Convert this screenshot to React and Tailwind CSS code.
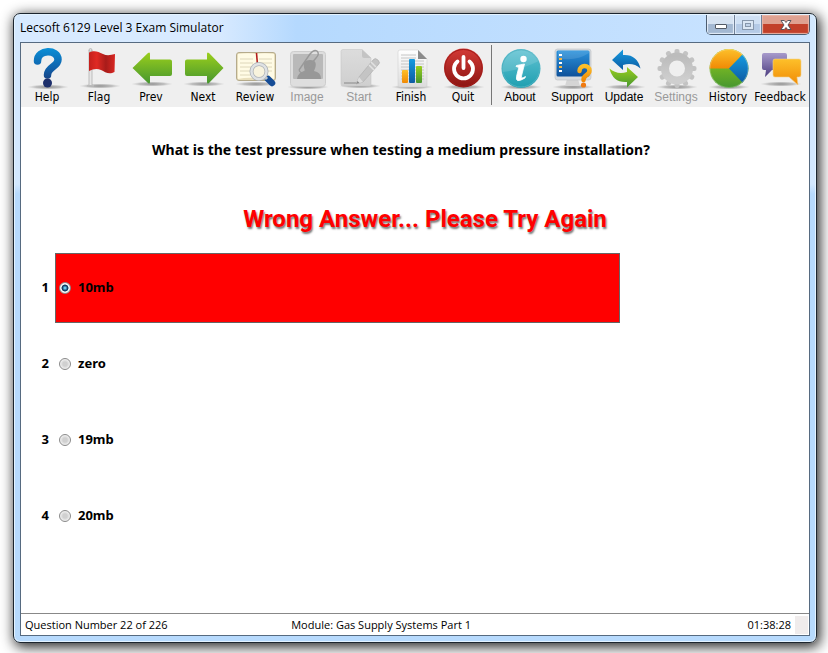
import { useState } from "react";

const TAHOMA = "font-['DejaVu_Sans_Condensed','Noto_Sans',sans-serif]";
const TAHOMA_BOLD = "font-['Noto_Sans',sans-serif] font-bold";
const SEGOE = "font-['Open_Sans',sans-serif]";

function Icon({ children, shadow = 41 }) {
  return (
    <svg viewBox="0 0 44 44" className="block h-11 w-11" aria-hidden="true">
      <ellipse cx="23" cy={shadow} rx="21" ry="2.5" fill="url(#floor)" />
      {children}
    </svg>
  );
}

function Gradient({ id, from, to }) {
  return (
    <linearGradient id={id} x1="0" y1="0" x2="0" y2="1">
      <stop offset="0" stopColor={from} />
      <stop offset="1" stopColor={to} />
    </linearGradient>
  );
}

function SharedGradients() {
  return (
    <svg className="absolute h-0 w-0" aria-hidden="true">
      <defs>
        <radialGradient id="floor">
          <stop offset="0" stopColor="#777" stopOpacity=".8" />
          <stop offset=".6" stopColor="#999" stopOpacity=".55" />
          <stop offset="1" stopColor="#bbb" stopOpacity="0" />
        </radialGradient>
        <linearGradient id="help" x1="0" y1="2" x2="0" y2="41" gradientUnits="userSpaceOnUse">
          <stop offset="0" stopColor="#0b8fd6" />
          <stop offset=".5" stopColor="#0f63ad" />
          <stop offset="1" stopColor="#1d2f6b" />
        </linearGradient>
        <linearGradient id="flag" x1="0" y1="0" x2="1" y2="0">
          <stop offset="0" stopColor="#c4201d" />
          <stop offset=".3" stopColor="#e02a24" />
          <stop offset=".65" stopColor="#a81c1a" />
          <stop offset="1" stopColor="#d92722" />
        </linearGradient>
        <Gradient id="green" from="#9bcf1c" to="#46962f" />
        <Gradient id="blue" from="#159be0" to="#0d5ba3" />
        <Gradient id="orange" from="#fdc02a" to="#f08a05" />
        <Gradient id="purple" from="#a79acb" to="#4c3d80" />
        <Gradient id="red" from="#d33a36" to="#8c1512" />
        <Gradient id="teal" from="#62c3d3" to="#1f9fb0" />
        <Gradient id="paper" from="#ffffff" to="#dcdcdc" />
        <Gradient id="gray" from="#dcdcdc" to="#cfcfcf" />
        <Gradient id="cog" from="#bcbcbc" to="#cfcfcf" />
        <Gradient id="screen" from="#2b93dc" to="#0e519a" />
      </defs>
    </svg>
  );
}

const help = (
  <Icon>
    <path d="M12.500 15C12.500 3 33 3 33 13.500C33 21 22.500 20.500 22.500 29" fill="none" stroke="url(#help)" strokeWidth="7.500" strokeLinecap="round" />
    <circle cx="22.500" cy="37" r="4.500" fill="#1d2f6b" />
  </Icon>
);
const flag = (
  <Icon shadow={40}>
    <path d="M12 4h3v36h-3z" fill="#e6e6e6" stroke="#aaa" strokeWidth=".7" />
    <circle cx="13.500" cy="4" r="1.500" fill="#ddd" stroke="#999" strokeWidth=".5" />
    <path d="M10 39h7v1.500h-7z" fill="#bbb" />
    <path d="M12 6.500C18 4 21 6 26 8C30 10 34 9 38 8L37.500 26C32 29 28 26 24 24C20 22 16 23 12 25z" fill="url(#flag)" />
  </Icon>
);
const prev = (
  <Icon shadow={38}>
    <path d="M3.500 22L19 7Q21 5.500 21 8V13.500H41Q43 13.500 43 15.500V28Q43 30 41 30H21V36Q21 38.500 19 37z" fill="url(#green)" />
  </Icon>
);
const next = (
  <Icon shadow={38}>
    <path d="M42.500 22L28 7Q26 5.500 26 8V13.500H6Q4 13.500 4 15.500V28Q4 30 6 30H26V36Q26 38.500 28 37z" fill="url(#green)" />
  </Icon>
);
const review = (
  <Icon shadow={38}>
    <rect x="3.500" y="6.500" width="39" height="28" rx="2.500" fill="#e9dfbd" stroke="#b5ab8c" />
    <path d="M5 8Q16 6.500 23 8V32Q14 31 5 33zM23 8Q32 6.500 41 8V33Q32 31 23 32z" fill="#fffbe5" />
    <path d="M7 13h13M7 17h13M7 21h13M7 25h10M7 29h10M26 13h13M26 17h13M33 21h6M35 25h4" stroke="#d6cfb0" strokeWidth=".8" />
    <path d="M23.500 7L24.500 19" stroke="#b31a1a" strokeWidth="1.600" />
    <path d="M35 33L39 37" stroke="#154c96" strokeWidth="6.500" strokeLinecap="round" />
    <path d="M31 30l3 3" stroke="#c4c8cc" strokeWidth="3" />
    <circle cx="26" cy="25.500" r="7.500" fill="#f7f2dc" fillOpacity=".9" stroke="#aeb2b6" strokeWidth="4" />
    <circle cx="26" cy="25.500" r="7.500" fill="none" stroke="#dfe2e4" strokeWidth="2.400" />
  </Icon>
);
const image = (
  <Icon>
    <rect x="5.500" y="5.500" width="35" height="35" rx="3" fill="#dedede" stroke="#cdcdcd" />
    <rect x="8" y="8" width="30" height="25" rx="1" fill="#b9b9b9" />
    <path d="M12 33Q13 26 20 25Q16 14 25 14Q34 14 29 25Q36 26 36 33z" fill="#989898" />
    <path d="M14 24L25 8Q29 3 32 5Q35 8 31 12L20 25Q16 29 14 24" fill="none" stroke="#999" strokeWidth="1.400" />
  </Icon>
);
const start = (
  <Icon shadow={40}>
    <path d="M6 3.500H25L34 12V38Q34 40 32 40H6Q4 40 4 38V5.500Q4 3.500 6 3.500" fill="url(#gray)" stroke="#c8c8c8" strokeWidth=".6" />
    <path d="M25 3.500L34 12H27Q25 12 25 10z" fill="#c4c4c4" />
    <path d="M7 37H20" stroke="#888" />
    <path d="M36 14Q38 11 41 14Q44 17 41 19L26 36L19 38L22 31z" fill="#c4c4c4" stroke="#b0b0b0" strokeWidth=".7" />
    <path d="M34 16l5 5M32 19l5 5" stroke="#e2e2e2" strokeWidth="1.500" />
    <path d="M22 31l4 5l-7 2z" fill="#ddd" />
    <path d="M20.500 35l2 2l-3.500 1z" fill="#888" />
  </Icon>
);
const finish = (
  <Icon>
    <path d="M11 4H29L38 13V39Q38 41 36 41H11Q9 41 9 39V6Q9 4 11 4" fill="url(#paper)" stroke="#d0d0d0" strokeWidth=".6" />
    <path d="M29 4L38 13H29z" fill="#8b8b8b" />
    <path d="M12 9h15M12 12h15M12 15h23M12 18h23M12 21h23M12 24h23M12 27h23M12 30h23M12 33h23" stroke="#bfbfbf" strokeWidth=".9" />
    <rect x="13" y="24" width="6" height="13" rx="1" fill="url(#orange)" />
    <rect x="20" y="13" width="6" height="24" rx="1" fill="url(#blue)" />
    <rect x="27" y="20" width="6" height="17" rx="1" fill="url(#green)" />
  </Icon>
);
const quit = (
  <Icon>
    <circle cx="22.500" cy="22" r="19.500" fill="url(#red)" />
    <circle cx="22.500" cy="22" r="18.500" fill="none" stroke="#a31c1a" />
    <path d="M16.500 15.500A9.500 9.500 0 1 0 28.500 15.500" fill="none" stroke="#fff" strokeWidth="3.800" strokeLinecap="round" />
    <path d="M22.500 11V22" stroke="#fff" strokeWidth="3.800" strokeLinecap="round" />
  </Icon>
);
const about = (
  <Icon>
    <circle cx="23" cy="22.500" r="19.500" fill="url(#teal)" />
    <circle cx="23" cy="22.500" r="18.500" fill="none" stroke="#4fb2c2" />
    <path d="M23 4A18.500 18.500 0 0 0 5 26Q22 24 41 15A18.500 18.500 0 0 0 23 4" fill="#fff" fillOpacity=".13" />
    <circle cx="25.500" cy="13" r="3.200" fill="#fff" />
    <path d="M18.500 19.500Q23 18.500 26.500 18L23.500 30Q22.500 33.500 27.500 30.500L27 32Q17 38 18.500 30.500L20.500 22.500Q21 20.500 18 20.500z" fill="#fff" stroke="#fff" strokeWidth=".8" />
  </Icon>
);
const support = (
  <Icon>
    <path d="M17 33H28L30 40H15z" fill="#d5d5d5" />
    <rect x="5" y="3" width="36" height="31" rx="2.500" fill="#d7dbdf" stroke="#bcc0c4" strokeWidth=".6" />
    <rect x="6.500" y="4.500" width="33" height="26" rx="1.500" fill="url(#screen)" />
    <path d="M8 12Q25 16 39 7V5H8z" fill="#fff" fillOpacity=".12" />
    <path d="M9 8h3v2h-3zM9 16h3v2h-3zM9 24h3v2h-3z" fill="#fff" />
    <path d="M9 12h3v2h-3zM9 20h3v2h-3z" fill="#f2b544" />
    <path d="M29.500 25C30 18 39.500 19 39.500 24.500C39.500 30 33.500 28 33.500 34" fill="none" stroke="url(#orange)" strokeWidth="4.500" strokeLinecap="round" />
    <circle cx="33.500" cy="39" r="2.600" fill="#ef7a10" />
  </Icon>
);
const update = (
  <Icon>
    <path d="M10 14L21 3.500V9Q35 8 38.500 22.500Q31 16 21 19V24z" fill="url(#blue)" />
    <path d="M36 31L25 41.500V36Q11 37 7.500 22.500Q15 29 25 26V21z" fill="url(#green)" />
  </Icon>
);
const cogTeeth = [0, 30, 60, 90, 120, 150];
const settings = (
  <Icon>
    {cogTeeth.map((angle) => (
      <g key={angle} transform={`rotate(${angle} 23 22.5)`} fill="#c3c3c3">
        <rect x="20.500" y="3" width="5" height="8" rx="2" />
        <rect x="20.500" y="34" width="5" height="8" rx="2" />
      </g>
    ))}
    <circle cx="23" cy="22.500" r="12" fill="none" stroke="url(#cog)" strokeWidth="8" />
  </Icon>
);
const history = (
  <Icon>
    <circle cx="23" cy="22.500" r="19.500" fill="url(#green)" />
    <path d="M23 22.500H3.500A19.500 19.500 0 0 1 36.500 8.500z" fill="url(#orange)" />
    <path d="M23 22.500L36.500 8.500A19.500 19.500 0 0 1 36.500 36.500z" fill="url(#blue)" />
    <circle cx="23" cy="22.500" r="19" fill="none" stroke="#fff" strokeOpacity=".25" />
  </Icon>
);
const feedback = (
  <Icon shadow={38}>
    <path d="M6 7H27Q29 7 29 9V22Q29 24 27 24H14L7 31L8 24H6Q4 24 4 22V9Q4 7 6 7" fill="url(#purple)" />
    <path d="M17 13H41Q43 13 43 15V29Q43 31 41 31H39L40 39L31 31H17Q15 31 15 29V15Q15 13 17 13" fill="url(#orange)" stroke="#f2d08a" strokeWidth=".6" />
  </Icon>
);

const examTools = [
  { label: "Help", icon: help },
  { label: "Flag", icon: flag },
  { label: "Prev", icon: prev },
  { label: "Next", icon: next },
  { label: "Review", icon: review },
  { label: "Image", icon: image, disabled: true, plain: true },
  { label: "Start", icon: start, disabled: true, plain: true },
  { label: "Finish", icon: finish },
  { label: "Quit", icon: quit },
];
const appTools = [
  { label: "About", icon: about, plain: true },
  { label: "Support", icon: support, plain: true },
  { label: "Update", icon: update, plain: true },
  { label: "Settings", icon: settings, disabled: true, plain: true },
  { label: "History", icon: history },
  { label: "Feedback", icon: feedback },
];

function ToolButton({ label, icon, disabled, plain }) {
  return (
    <button type="button" disabled={disabled} className="flex w-[52px] flex-col items-center pt-[3px]">
      {icon}
      <span
        className={`whitespace-nowrap text-[12px] leading-[14px] ${plain ? "font-['Liberation_Sans',sans-serif]" : TAHOMA} ${
          disabled ? "text-[#999]" : "text-black"
        }`}
      >
        {label}
      </span>
    </button>
  );
}

function CaptionButtons() {
  return (
    <div className="flex h-5 overflow-hidden rounded-b-[5px] border border-t-0 border-[#4d5d70]">
      <button type="button" aria-label="Minimize" className="flex w-7 items-center justify-center border-r border-[#71829a] bg-linear-to-b from-[#d5e2f1] from-45% to-[#a3b8d2] to-50% inset-shadow-[0_0_1px_1px_#e6effa]">
        <svg viewBox="0 0 12 6" className="mt-1 h-1.5 w-3"><rect x=".5" y=".5" width="11" height="4" rx=".5" fill="#fff" stroke="#535b66" /></svg>
      </button>
      <button type="button" aria-label="Maximize" disabled className="flex w-[27px] items-center justify-center border-r border-[#71829a] bg-linear-to-b from-[#cfe0f4] from-45% to-[#b4cae6] to-50% inset-shadow-[0_0_1px_1px_#e0ecfa]">
        <svg viewBox="0 0 12 10" className="h-2.5 w-3"><rect x=".5" y=".5" width="11" height="9" fill="#dbe7f4" stroke="#8797ab" /><rect x="3.500" y="3.500" width="5" height="3" fill="#c1d3e9" stroke="#8797ab" /></svg>
      </button>
      <button type="button" aria-label="Close" className="flex w-[47px] items-center justify-center bg-linear-to-b from-[#dfa191] from-45% to-[#c2402a] to-50% inset-shadow-[0_0_1px_1px_#e8b5a8]">
        <svg viewBox="0 0 12 10" className="h-2.5 w-3"><path d="M1 .5H4.300L6 2.500L7.700 .5H11L8 5L11 9.500H7.700L6 7.500L4.300 9.500H1L4 5z" fill="#fff" stroke="#4c4e57" strokeWidth=".9" /></svg>
      </button>
    </div>
  );
}

const answers = ["10mb", "zero", "19mb", "20mb"];

function Answer({ number, text, checked, onPick }) {
  return (
    <li className="flex h-[70px] items-center gap-[6px]">
      <span className="w-7 text-right">{number}</span>
      <label
        className={`flex h-full w-[565px] items-center gap-[7px] border pl-[3px] ${
          checked ? "border-[#666] bg-[#ff0000]" : "border-transparent"
        }`}
      >
        <input
          type="radio"
          name="answer"
          checked={checked}
          onChange={onPick}
          className="h-3 w-3 appearance-none rounded-full border border-[#8a8a8a] bg-[radial-gradient(circle,#d0d0d0_30%,#f6f6f6_75%)] checked:bg-[radial-gradient(circle,#6ed0f5_8%,#123f66_36%,#123f66_44%,#f4f4f4_54%)]"
        />
        {text}
      </label>
    </li>
  );
}

export default function App() {
  const [picked, setPicked] = useState(0);
  return (
    <div className="flex min-h-screen overflow-hidden bg-white pt-[13px] pr-[11px] pb-[10px] pl-[13px] text-black">
      <SharedGradients />
      <div className="flex flex-1 flex-col rounded-[7px] border border-[#1c252e] bg-linear-to-b from-[#d3e8fe] from-[170px] to-[#b7dafd] to-[180px] px-1.5 pb-1.5 inset-shadow-[0_0_0_1px_#e4f3ff] shadow-[2px_3px_13px_1px_rgba(0,0,0,0.85)]">
        <header className="mt-px -mb-px flex h-7 items-start justify-between bg-linear-to-r from-[#d8eaff] from-25% via-[#b5d9fe] via-35% to-[#cbe4ff]">
          <h1 className={`${SEGOE} text-[12px] leading-[26px]`}>Lecsoft 6129 Level 3 Exam Simulator</h1>
          <CaptionButtons />
        </header>
        <div className="flex flex-1 flex-col border border-[#566a80] bg-white">
          <nav className="flex h-16 justify-start bg-[#efefef]">
            <div className="flex">
              {examTools.map((t) => <ToolButton key={t.label} {...t} />)}
            </div>
            <div className="mx-[2px] my-[2px] w-px bg-[#777]" />
            <div className="flex">
              {appTools.map((t) => <ToolButton key={t.label} {...t} />)}
            </div>
          </nav>
          <main className={`flex-1 ${TAHOMA_BOLD}`}>
            <h2 className="pt-8 pr-7 text-center text-[14px] leading-[22px]">
              What is the test pressure when testing a medium pressure installation?
            </h2>
            <p className="pt-[42px] pl-5 text-center font-['Roboto',sans-serif] text-[24px] leading-8 text-[#ff0000] [text-shadow:1px_2px_2px_#777]">
              Wrong Answer... Please Try Again
            </p>
            <ol className="mt-[18px] flex flex-col gap-1.5 text-[13px]">
              {answers.map((a, i) => (
                <Answer key={a} number={i + 1} text={a} checked={picked === i} onPick={() => setPicked(i)} />
              ))}
            </ol>
          </main>
          <footer className={`flex h-[22px] border-t border-[#888] pr-px pl-1 text-[11px] leading-[21px] ${SEGOE}`}>
            <span className="w-[34%]">Question Number 22 of 226</span>
            <span className="flex-1 whitespace-nowrap">Module: Gas Supply Systems Part 1</span>
            <span className="flex justify-end gap-1">01:38:28<i className="mt-[2px] h-[18px] w-[13px] bg-[#f0ecec]" /></span>
          </footer>
        </div>
      </div>
    </div>
  );
}
